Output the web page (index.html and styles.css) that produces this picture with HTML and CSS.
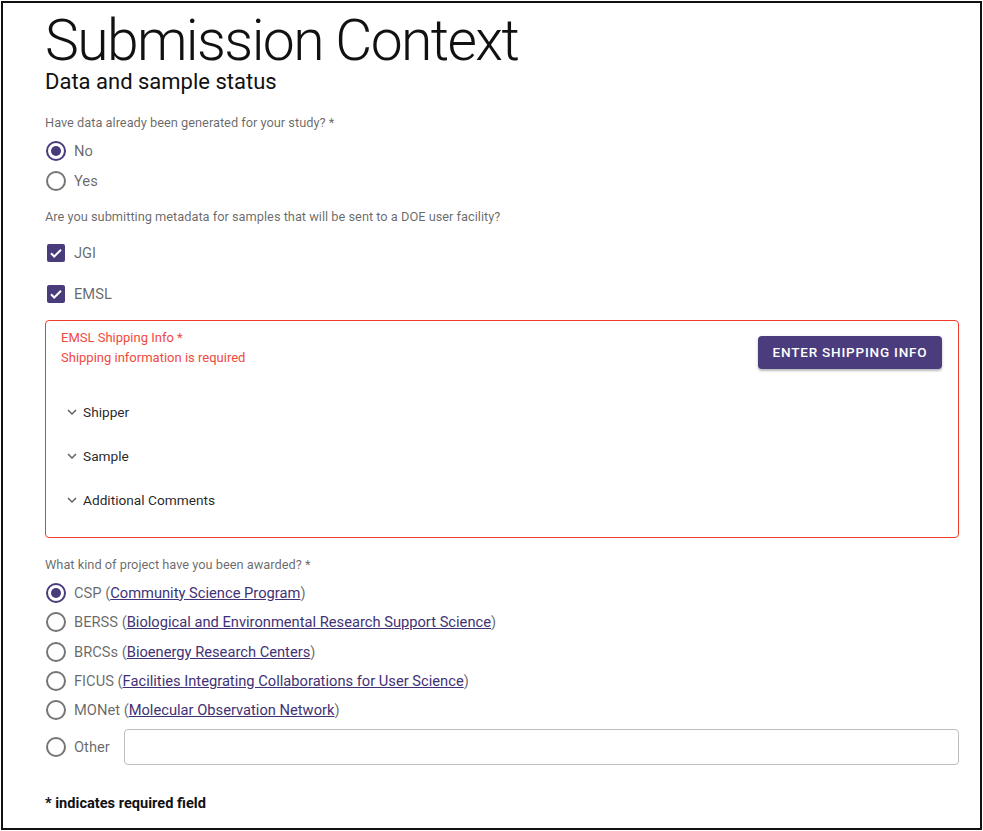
FILE: index.html
```html
<!DOCTYPE html>
<html>
<head>
<meta charset="utf-8">
<link rel="stylesheet" href="styles.css">
</head>
<body>
<div class="frame">
  <h1 class="title">Submission Context</h1>
  <h2 class="subtitle">Data and sample status</h2>

  <div class="qlabel q1">Have data already been generated for your study? *</div>
  <div class="radio-row r30">
    <svg class="ico" viewBox="0 0 24 24"><circle cx="12" cy="12" r="9" fill="none" stroke="#4a3c7a" stroke-width="2"/><circle cx="12" cy="12" r="5" fill="#4a3c7a"/></svg>
    <span class="opt">No</span>
  </div>
  <div class="radio-row r30">
    <svg class="ico" viewBox="0 0 24 24"><circle cx="12" cy="12" r="9" fill="none" stroke="#757575" stroke-width="2"/></svg>
    <span class="opt">Yes</span>
  </div>

  <div class="qlabel q2">Are you submitting metadata for samples that will be sent to a DOE user facility?</div>
  <div class="radio-row r41">
    <svg class="ico" viewBox="0 0 24 24"><rect x="3" y="3" width="18" height="18" rx="2" fill="#4a3c7a"/><path d="M7 12.3l3.2 3.2L17 8.7" fill="none" stroke="#fff" stroke-width="2"/></svg>
    <span class="opt">JGI</span>
  </div>
  <div class="radio-row r41">
    <svg class="ico" viewBox="0 0 24 24"><rect x="3" y="3" width="18" height="18" rx="2" fill="#4a3c7a"/><path d="M7 12.3l3.2 3.2L17 8.7" fill="none" stroke="#fff" stroke-width="2"/></svg>
    <span class="opt">EMSL</span>
  </div>

  <div class="shipbox">
    <div class="ship-head">
      <div class="ship-msgs">
        <div class="err">EMSL Shipping Info *</div>
        <div class="err">Shipping information is required</div>
      </div>
      <button class="btn">ENTER SHIPPING INFO</button>
    </div>
    <div class="panel"><svg class="chev" viewBox="0 0 24 24"><path d="M7.4 8.6L12 13.2l4.6-4.6L18 10l-6 6-6-6z" fill="#616161"/></svg><span>Shipper</span></div>
    <div class="panel"><svg class="chev" viewBox="0 0 24 24"><path d="M7.4 8.6L12 13.2l4.6-4.6L18 10l-6 6-6-6z" fill="#616161"/></svg><span>Sample</span></div>
    <div class="panel"><svg class="chev" viewBox="0 0 24 24"><path d="M7.4 8.6L12 13.2l4.6-4.6L18 10l-6 6-6-6z" fill="#616161"/></svg><span>Additional Comments</span></div>
  </div>

  <div class="qlabel q3">What kind of project have you been awarded? *</div>
  <div class="radio-row r29">
    <svg class="ico" viewBox="0 0 24 24"><circle cx="12" cy="12" r="9" fill="none" stroke="#4a3c7a" stroke-width="2"/><circle cx="12" cy="12" r="5" fill="#4a3c7a"/></svg>
    <span class="opt">CSP (<a href="#">Community Science Program</a>)</span>
  </div>
  <div class="radio-row r29">
    <svg class="ico" viewBox="0 0 24 24"><circle cx="12" cy="12" r="9" fill="none" stroke="#757575" stroke-width="2"/></svg>
    <span class="opt">BERSS (<a href="#">Biological and Environmental Research Support Science</a>)</span>
  </div>
  <div class="radio-row r29">
    <svg class="ico" viewBox="0 0 24 24"><circle cx="12" cy="12" r="9" fill="none" stroke="#757575" stroke-width="2"/></svg>
    <span class="opt">BRCSs (<a href="#">Bioenergy Research Centers</a>)</span>
  </div>
  <div class="radio-row r29">
    <svg class="ico" viewBox="0 0 24 24"><circle cx="12" cy="12" r="9" fill="none" stroke="#757575" stroke-width="2"/></svg>
    <span class="opt">FICUS (<a href="#">Facilities Integrating Collaborations for User Science</a>)</span>
  </div>
  <div class="radio-row r29">
    <svg class="ico" viewBox="0 0 24 24"><circle cx="12" cy="12" r="9" fill="none" stroke="#757575" stroke-width="2"/></svg>
    <span class="opt">MONet (<a href="#">Molecular Observation Network</a>)</span>
  </div>
  <div class="radio-row other-row">
    <svg class="ico" viewBox="0 0 24 24"><circle cx="12" cy="12" r="9" fill="none" stroke="#757575" stroke-width="2"/></svg>
    <span class="opt">Other</span>
    <div class="field"></div>
  </div>

  <div class="footnote">* indicates required field</div>
</div>
</body>
</html>
```

FILE: styles.css
```css
html, body {
  margin: 0;
  padding: 0;
  background: #fff;
}
body {
  font-family: Roboto, "Liberation Sans", sans-serif;
  color: rgba(0,0,0,0.87);
}
.frame {
  box-sizing: border-box;
  margin: 1px;
  width: 981px;
  height: 829px;
  border: 2px solid #111;
  padding: 0 21px 0 42px;
  overflow: hidden;
}
.title {
  margin: 9px 0 0 0;
  font-size: 57px;
  line-height: 57px;
  font-weight: 300;
  letter-spacing: -1.6px;
  color: #111;
}
.subtitle {
  margin: 0;
  font-size: 22px;
  line-height: 25px;
  font-weight: 400;
  color: #111;
}
.qlabel {
  font-size: 12.8px;
  line-height: 20px;
  color: rgba(0,0,0,0.6);
}
.q1 { margin-top: 19px; }
.q2 { margin-top: 11px; }
.q3 { margin-top: 17px; }
.radio-row {
  display: flex;
  align-items: center;
}
.r30 { height: 30px; }
.q1 + .r30 { margin-top: 3px; }
.r41 { height: 41px; }
.q2 + .r41 { margin-top: 5.5px; }
.r29 { height: 29.3px; }
.q3 + .r29 { margin-top: 3.3px; }
.ico {
  width: 24px;
  height: 24px;
  flex: none;
  margin-left: -1px;
}
.opt {
  margin-left: 6px;
  font-size: 14.7px;
  color: rgba(0,0,0,0.6);
}
.opt a {
  color: #3f3275;
  text-decoration: underline;
}
.shipbox {
  margin-top: 5.5px;
  border: 1.5px solid #f23b2b;
  border-radius: 4px;
  height: 218px;
  box-sizing: border-box;
  padding: 6.5px 16px 0 15px;
}
.ship-head {
  display: flex;
  justify-content: space-between;
  align-items: flex-start;
  height: 41px;
}
.err {
  font-size: 13px;
  line-height: 20px;
  color: #f04a3e;
}
.btn {
  margin-top: 8px;
  height: 33px;
  width: 184px;
  border: none;
  border-radius: 4px;
  background: #4b3d7d;
  color: #fff;
  font-family: Roboto, "Liberation Sans", sans-serif;
  font-size: 13.5px;
  font-weight: 500;
  letter-spacing: 0.8px;
  box-shadow: 0 2px 2px rgba(0,0,0,0.2), 0 1px 4px rgba(0,0,0,0.12);
  padding: 0;
}
.panel {
  display: flex;
  align-items: center;
  height: 44px;
  font-size: 13.7px;
  color: rgba(0,0,0,0.87);
}
.ship-head + .panel { margin-top: 21px; }
.chev {
  width: 18px;
  height: 18px;
  margin-left: 2px;
  margin-right: 2px;
}
.other-row {
  height: 36px;
  margin-top: 4px;
}
.other-row .opt { width: 50px; }
.field {
  flex: 1;
  height: 36px;
  box-sizing: border-box;
  border: 1px solid #bdbdbd;
  border-radius: 4px;
}
.footnote {
  margin-top: 28px;
  font-size: 14.6px;
  line-height: 20px;
  font-weight: 700;
  color: #111;
}
```
